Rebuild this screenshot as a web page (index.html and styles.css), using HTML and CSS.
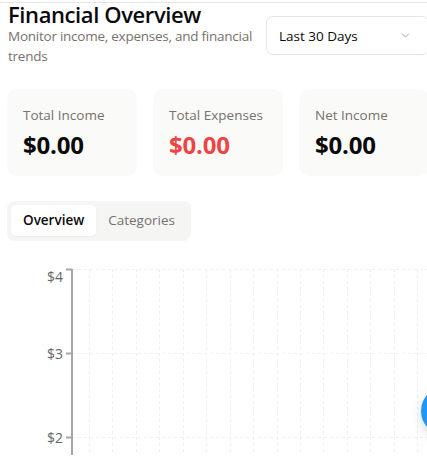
FILE: index.html
```html
<!DOCTYPE html>
<html lang="en">
<head>
<meta charset="utf-8">
<title>Financial Overview</title>
<link rel="stylesheet" href="styles.css">
</head>
<body>
<div class="topline"></div>
<main class="page">
  <header class="header">
    <div class="heading">
      <h1 class="title">Financial Overview</h1>
      <p class="subtitle">Monitor income, expenses, and financial trends</p>
    </div>
    <div class="select">
      <span>Last 30 Days</span>
      <svg class="chevron" width="13" height="13" viewBox="0 0 24 24" fill="none" stroke="#a3a3a3" stroke-width="1.8" stroke-linecap="round" stroke-linejoin="round"><path d="M6 9l6 6 6-6"/></svg>
    </div>
  </header>

  <section class="cards">
    <div class="card">
      <div class="card-label">Total Income</div>
      <div class="card-value">$0.00</div>
    </div>
    <div class="card">
      <div class="card-label">Total Expenses</div>
      <div class="card-value red">$0.00</div>
    </div>
    <div class="card">
      <div class="card-label">Net Income</div>
      <div class="card-value">$0.00</div>
    </div>
  </section>

  <div class="tabs">
    <button class="tab active">Overview</button>
    <button class="tab">Categories</button>
  </div>

  <div class="chart">
    <svg width="427" height="200" viewBox="0 0 427 200">
      <g stroke="#efefef" stroke-width="1" stroke-dasharray="3 3" fill="none">
        <line x1="72" y1="14.5" x2="427" y2="14.5"/>
        <line x1="72" y1="98.5" x2="427" y2="98.5"/>
        <line x1="72" y1="182.5" x2="427" y2="182.5"/>
        <line x1="89.5" y1="14" x2="89.5" y2="200"/>
        <line x1="112.5" y1="14" x2="112.5" y2="200"/>
        <line x1="136.5" y1="14" x2="136.5" y2="200"/>
        <line x1="159.5" y1="14" x2="159.5" y2="200"/>
        <line x1="183.5" y1="14" x2="183.5" y2="200"/>
        <line x1="206.5" y1="14" x2="206.5" y2="200"/>
        <line x1="230.5" y1="14" x2="230.5" y2="200"/>
        <line x1="253.5" y1="14" x2="253.5" y2="200"/>
        <line x1="277.5" y1="14" x2="277.5" y2="200"/>
        <line x1="300.5" y1="14" x2="300.5" y2="200"/>
        <line x1="323.5" y1="14" x2="323.5" y2="200"/>
        <line x1="347.5" y1="14" x2="347.5" y2="200"/>
        <line x1="370.5" y1="14" x2="370.5" y2="200"/>
        <line x1="394.5" y1="14" x2="394.5" y2="200"/>
        <line x1="417.5" y1="14" x2="417.5" y2="200"/>
      </g>
      <g stroke="#a6a6a6" stroke-width="2" fill="none">
        <line x1="72" y1="14" x2="72" y2="200"/>
        <line x1="66" y1="14.5" x2="72" y2="14.5"/>
        <line x1="66" y1="98.5" x2="72" y2="98.5"/>
        <line x1="66" y1="182.5" x2="72" y2="182.5"/>
      </g>
      <g class="tick" text-anchor="end">
        <text x="63" y="27">$4</text>
        <text x="63" y="104">$3</text>
        <text x="63" y="188">$2</text>
      </g>
    </svg>
  </div>
</main>
<button class="fab" aria-label="Add"></button>
</body>
</html>
```

FILE: styles.css
```css
html, body {
  margin: 0;
  padding: 0;
  background: #ffffff;
  overflow: hidden;
  width: 427px;
  height: 456px;
}

body {
  font-family: "Open Sans", "Noto Sans", "Liberation Sans", sans-serif;
  color: #0a0a0a;
  position: relative;
}

.topline {
  height: 2px;
  border-bottom: 1px solid #e5e5e5;
}

.page {
  width: 422px;
  padding-left: 7px;
}

.header {
  display: flex;
  align-items: center;
  gap: 8px;
}

.heading {
  flex: 1;
  padding-left: 1px;
}

.title {
  margin: 0;
  font-size: 22px;
  line-height: 23px;
  font-weight: 600;
  letter-spacing: -0.4px;
  color: #0a0a0a;
}

.subtitle {
  margin: 0;
  font-size: 13.5px;
  line-height: 20px;
  letter-spacing: -0.25px;
  color: #78716c;
}

.select {
  flex: 0 0 163px;
  height: 39px;
  border: 1px solid #e7e5e4;
  border-radius: 7px;
  display: flex;
  align-items: center;
  justify-content: space-between;
  padding: 0 16px 0 12px;
  box-sizing: border-box;
  margin-top: 2px;
  font-size: 13.5px;
  color: #0a0a0a;
}

.chevron {
  display: block;
}

.cards {
  display: grid;
  grid-template-columns: repeat(3, 1fr);
  gap: 16px;
  margin-top: 23px;
}

.card {
  background: #fafaf9;
  border-radius: 10px;
  padding: 16px 16px 15px;
}

.card-label {
  font-size: 13.5px;
  line-height: 20px;
  color: #78716c;
  font-weight: 500;
}

.card-value {
  margin-top: 4px;
  font-size: 24px;
  line-height: 32px;
  font-weight: 700;
  color: #0a0a0a;
  letter-spacing: -0.2px;
}

.card-value.red {
  color: #ef4444;
}

.tabs {
  display: inline-flex;
  margin-top: 25px;
  padding: 4px 4px 5px;
  background: #f5f5f4;
  border-radius: 8px;
}

.tab {
  font-family: inherit;
  font-size: 13.5px;
  font-weight: 500;
  line-height: 31px;
  height: 31px;
  padding: 0 12px;
  border: 0;
  border-radius: 5px;
  background: transparent;
  color: #78716c;
}

.tab.active {
  background: #ffffff;
  color: #0a0a0a;
  font-weight: 600;
  box-shadow: 0 1px 2px rgba(0, 0, 0, 0.04);
}

.chart {
  margin-top: 14px;
  margin-left: -7px;
}

.chart svg {
  display: block;
}

.tick text {
  font-family: "Open Sans", "Noto Sans", sans-serif;
  font-size: 14px;
  fill: #666666;
}

.fab {
  position: absolute;
  left: 421px;
  top: 387px;
  width: 48px;
  height: 48px;
  border-radius: 50%;
  border: 0;
  background: #2196f3;
  box-shadow: 0 4px 12px rgba(0, 0, 0, 0.15);
}
```
